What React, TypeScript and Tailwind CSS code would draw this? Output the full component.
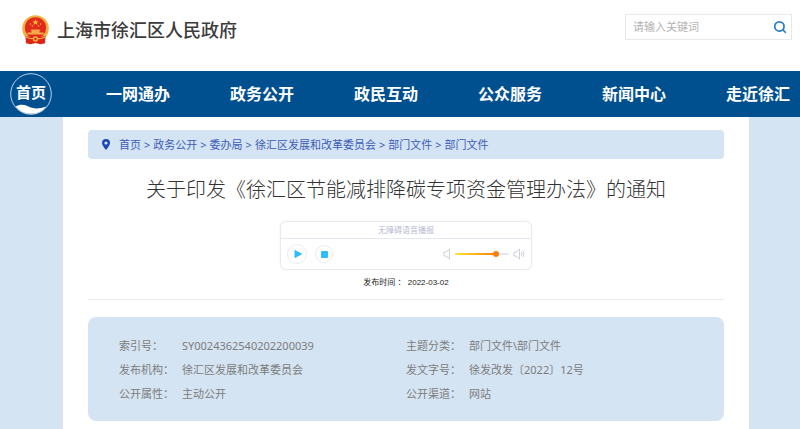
import { Search } from "lucide-react";

const navItems = ["一网通办", "政务公开", "政民互动", "公众服务", "新闻中心", "走近徐汇"];

const crumbs = ["首页", "政务公开", "委办局", "徐汇区发展和改革委员会", "部门文件", "部门文件"];

const details = [
  ["索引号：", "SY0024362540202200039", "主题分类：", "部门文件\\部门文件"],
  ["发布机构：", "徐汇区发展和改革委员会", "发文字号：", "徐发改发〔2022〕12号"],
  ["公开属性：", "主动公开", "公开渠道：", "网站"],
];

function Emblem() {
  return (
    <svg viewBox="0 0 27 30" className="h-[30px] w-[27px] shrink-0" aria-hidden="true">
      <circle cx="13.5" cy="13.5" r="13.3" fill="#f3b040" />
      <path d="M3.500 21.500L4 28.200L8.500 29.300L13.500 28L18.500 29.300L23 28.200L23.500 21.500Z" fill="#dc2418" />
      <circle cx="13.5" cy="12.8" r="10.6" fill="#e2291c" />
      <path d="M13.5 4.2l.9 2.1 2.2.1-1.7 1.4.6 2.2-2-1.2-2 1.2.6-2.2-1.7-1.4 2.2-.1z" fill="#f7b53c" />
      <circle cx="8.4" cy="9" r=".8" fill="#f7b53c" />
      <circle cx="10.4" cy="11" r=".8" fill="#f7b53c" />
      <circle cx="16.6" cy="11" r=".8" fill="#f7b53c" />
      <circle cx="18.6" cy="9" r=".8" fill="#f7b53c" />
      <path d="M9.500 14.500h8l1 1.300h-1v1.600h4v2.100H5.500v-2.100h4v-1.600h-1z" fill="#f5a94a" />
      <path d="M4 22.300q4.500 1.600 7 1.200M23 22.300q-4.500 1.600-7 1.200" fill="none" stroke="#f3b040" strokeWidth="1.200" />
      <circle cx="13.500" cy="24" r="2.700" fill="#f3b040" />
      <circle cx="13.500" cy="24" r="1.200" fill="#dc2418" />
    </svg>
  );
}

function Speaker({ loud }: { loud?: boolean }) {
  return (
    <svg viewBox="0 0 12 12" className="h-3 w-3" fill="none" stroke="#cfd0d8" strokeWidth="1" aria-hidden="true">
      <path d="M1 4h2l3.500-3v10L3 8H1z" strokeLinejoin="round" />
      {loud && <path d="M8.300 4q1.200 2 0 4M10 2.800q2 3.200 0 6.400" />}
    </svg>
  );
}

function Player() {
  return (
    <section
      aria-label="语音播报"
      className="mx-auto mt-[17px] w-[252px] rounded-md border border-[#ebebef] bg-white shadow-[0_0_2px_#ececf0]"
    >
      <h2 className="border-b border-[#e6e8f1] text-center text-[8px] leading-4 text-[#b5b9d0]">无障碍语音播报</h2>
      <div className="flex h-[30px] items-center px-1.5">
        <button type="button" aria-label="播放" className="flex size-5 items-center justify-center rounded-full border border-[#ececf0]">
          <svg viewBox="0 0 8 8" className="ml-px size-2" aria-hidden="true">
            <path d="M1 .5v7L7.500 4z" fill="#2dbdfb" stroke="#2dbdfb" strokeLinejoin="round" />
          </svg>
        </button>
        <button type="button" aria-label="停止" className="ml-2 flex size-[18px] items-center justify-center rounded-full border border-[#ececf0]">
          <span className="size-[7px] rounded-[1px] bg-[#2dbdfb]" />
        </button>
        <div className="ml-auto flex items-center gap-1">
          <span className="-mr-1">
            <Speaker />
          </span>
          <input
            type="range"
            aria-label="音量"
            defaultValue={80}
            className="h-[2px] w-[54px] appearance-none rounded-full bg-[linear-gradient(to_right,#ffe23a,#ff7d0a_77%,#e6e6ee_77%)] [&::-webkit-slider-thumb]:size-[6px] [&::-webkit-slider-thumb]:appearance-none [&::-webkit-slider-thumb]:rounded-full [&::-webkit-slider-thumb]:bg-[#ff7d0a]"
          />
          <Speaker loud />
        </div>
      </div>
    </section>
  );
}

export default function App() {
  return (
    <div className="min-h-screen bg-[#d5e4f3] font-['Noto_Sans','Noto_Sans_CJK_SC',sans-serif]">
      <header className="flex h-[71px] items-start justify-between bg-white pr-2 pl-[22px]">
        <a href="#" className="mt-[15px] flex items-center gap-2 text-[18px] leading-[30px] font-medium text-[#3c3c3c]">
          <Emblem />
          上海市徐汇区人民政府
        </a>
        <form className="mt-[14px] flex h-[26px] w-[167px] items-center border border-[#e9e9e9] bg-white pr-1 pl-[7px]">
          <input
            type="text"
            aria-label="搜索"
            placeholder="请输入关键词"
            className="min-w-0 flex-1 text-[11px] leading-4 text-[#555] outline-none placeholder:text-[#b3b3b3]"
          />
          <button type="button" aria-label="搜索">
            <Search className="size-[14px] text-[#2a7fc6]" strokeWidth={3} />
          </button>
        </form>
      </header>

      <nav className="flex h-[46px] items-center bg-[#00508f] px-[10px] font-bold text-white">
        <a href="#" className="relative flex size-[42px] shrink-0 items-center justify-center">
          <svg viewBox="0 0 42 42" className="absolute inset-0 size-full" aria-hidden="true">
            <circle cx="21" cy="21" r="20.300" fill="none" stroke="#b9cfe2" strokeWidth="1" />
            <path d="M5.500 33.500C12 29.500 17 33 22 34.800C27 36.500 31 35 36.500 33.500A20 20 0 0 1 5.500 33.500Z" fill="#fff" />
          </svg>
          <span className="relative pb-1 text-[15px] leading-5">首页</span>
        </a>
        <ul className="ml-[54px] flex flex-1 justify-between text-[16px] leading-6">
          {navItems.map((item) => (
            <li key={item}>
              <a href="#" className="whitespace-nowrap">{item}</a>
            </li>
          ))}
        </ul>
      </nav>

      <div className="pr-[51px] pl-[63px]">
        <main className="bg-white px-[25px] pt-[13px] pb-2">
          <div className="flex h-[29px] items-center rounded bg-[#d5e4f3] pl-[14px] text-[11px] leading-4 text-[#3c5cb8]">
            <svg viewBox="0 0 8 11" className="h-[11px] w-2 shrink-0" aria-hidden="true">
              <path d="M4 0a4 4 0 0 0-4 4c0 2.600 4 7 4 7s4-4.400 4-7a4 4 0 0 0-4-4zm0 2.400a1.600 1.600 0 1 1 0 3.200a1.600 1.600 0 0 1 0-3.200z" fill="#1d48b4" fillRule="evenodd" />
            </svg>
            <ol className="ml-[9px] flex items-center gap-[3px]">
              {crumbs.map((crumb, i) => (
                <li key={i} className="flex items-center gap-[3px] whitespace-nowrap">
                  {i > 0 && <span>&gt;</span>}
                  <a href="#">{crumb}</a>
                </li>
              ))}
            </ol>
          </div>

          <h1 className="mt-[17px] text-center text-[20px] leading-7 font-light text-[#333]">
            关于印发《徐汇区节能减排降碳专项资金管理办法》的通知
          </h1>

          <Player />

          <p className="mt-[7px] text-center font-['Liberation_Sans','Noto_Sans_CJK_SC',sans-serif] text-[8px] leading-3 text-[#222]">
            发布时间 ： 2022-03-02
          </p>

          <hr className="mt-[10px] border-[#ececec]" />

          <div className="mt-[17px] rounded-lg bg-[#d5e4f3] pt-[17px] pb-[15px] pl-[31px]">
            <table className="w-full table-fixed text-left text-[11px] leading-6 text-[#7c7c7c]">
              <colgroup>
                <col className="w-[63px]" />
                <col className="w-[224px]" />
                <col className="w-[63px]" />
                <col />
              </colgroup>
              <tbody>
                {details.map(([labelA, valueA, labelB, valueB]) => (
                  <tr key={labelA}>
                    <th scope="row" className="p-0 font-normal whitespace-nowrap">{labelA}</th>
                    <td className="p-0">{valueA}</td>
                    <th scope="row" className="p-0 font-normal whitespace-nowrap">{labelB}</th>
                    <td className="p-0">{valueB}</td>
                  </tr>
                ))}
              </tbody>
            </table>
          </div>
        </main>
      </div>
    </div>
  );
}
